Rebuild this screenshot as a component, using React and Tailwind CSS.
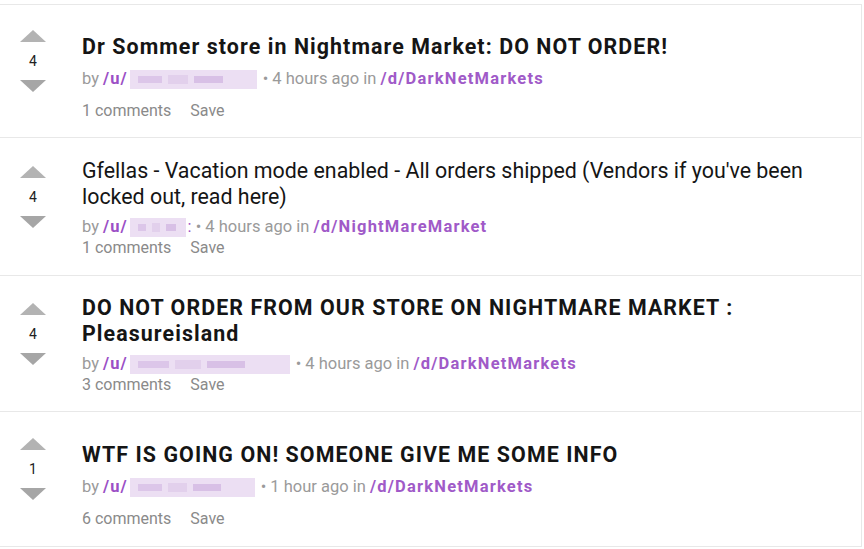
const posts = [
  {
    votes: 4,
    title: "Dr Sommer store in Nightmare Market: DO NOT ORDER!",
    bold: true,
    blur: 127,
    tail: "",
    ago: "4 hours ago",
    sub: "/d/DarkNetMarkets",
    comments: 1,
    h: "h-[133px]",
    spaced: true,
  },
  {
    votes: 4,
    title: "Gfellas - Vacation mode enabled - All orders shipped (Vendors if you've been locked out, read here)",
    bold: false,
    blur: 56,
    tail: ":",
    ago: "4 hours ago",
    sub: "/d/NightMareMarket",
    comments: 1,
    h: "h-[138px]",
    spaced: false,
  },
  {
    votes: 4,
    title: "DO NOT ORDER FROM OUR STORE ON NIGHTMARE MARKET : Pleasureisland",
    bold: true,
    blur: 160,
    tail: "",
    ago: "4 hours ago",
    sub: "/d/DarkNetMarkets",
    comments: 3,
    h: "h-[136px]",
    spaced: false,
  },
  {
    votes: 1,
    title: "WTF IS GOING ON! SOMEONE GIVE ME SOME INFO",
    bold: true,
    blur: 125,
    tail: "",
    ago: "1 hour ago",
    sub: "/d/DarkNetMarkets",
    comments: 6,
    h: "h-[135px]",
    spaced: true,
  },
];

function Blur({ width }) {
  return (
    <span
      className="mx-[2px] inline-flex h-[19px] items-center gap-[6px] bg-[#ecdff3] px-[8px] align-middle"
      style={{ width }}
    >
      <span className="h-[7px] w-[22%] bg-[#dcc6e9]" />
      <span className="h-[9px] w-[18%] bg-[#e2d0ec]" />
      <span className="h-[7px] w-[26%] bg-[#d8c0e6]" />
    </span>
  );
}

function Vote({ n }) {
  return (
    <div className="mb-[20px] flex w-[66px] shrink-0 flex-col items-center">
      <div className="h-0 w-0 border-x-[13px] border-b-[12px] border-x-transparent border-b-[#b3b3b3]" />
      <div className="py-[9px] text-[14px] leading-[20px] text-[#222]">{n}</div>
      <div className="h-0 w-0 border-x-[13px] border-t-[12px] border-x-transparent border-t-[#a6a6a6]" />
    </div>
  );
}

function Post({ p }) {
  return (
    <div className={`flex items-center border-b border-[#e8e8e8] bg-white ${p.h}`}>
      <Vote n={p.votes} />
      <div className="min-w-0 flex-1 pl-[16px] pr-[40px]">
        <h2
          className={`${p.spaced ? "mt-[13px]" : "mt-[3px]"} text-[21.4px] leading-[26px] text-[#151515] ${
            p.bold ? "font-bold tracking-[1.07px]" : "font-normal"
          }`}
        >
          {p.title}
        </h2>
        <div className={`${p.spaced ? "mt-[9px]" : "mt-[7px]"} text-[16.5px] leading-[20px] text-[#9a9a9a]`}>
          by <span className="font-bold tracking-[1px] text-[#9b4fc6]">/u/</span>
          <Blur width={p.blur} />
          {p.tail && <span className="text-[#9b4fc6]">{p.tail}</span>}
          <span> • {p.ago} in </span>
          <span className="font-bold tracking-[1.2px] text-[#a05ac8]">{p.sub}</span>
        </div>
        <div
          className={`${p.spaced ? "mt-[12px]" : "mt-[1px]"} flex gap-[19px] text-[16px] leading-[20px] text-[#8a8a8a]`}
        >
          <span>{p.comments} comments</span>
          <span>Save</span>
        </div>
      </div>
    </div>
  );
}

export default function App() {
  return (
    <div className="h-[549px] w-[864px] bg-white pt-[4px] font-['Roboto',sans-serif]">
      <div className="w-[862px] border-r border-t border-[#e8e8e8]">
        {posts.map((p, i) => (
          <Post key={i} p={p} />
        ))}
      </div>
    </div>
  );
}
